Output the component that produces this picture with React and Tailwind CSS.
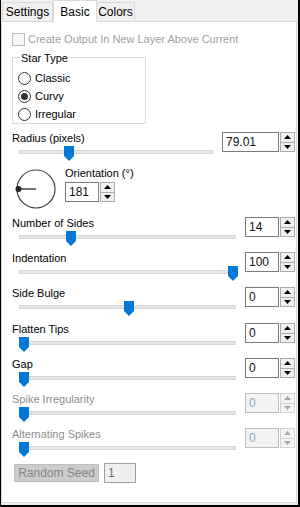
import React from "react";

const font = "font-['Liberation_Sans',Arial,sans-serif]";

function Thumb({ left }) {
  return (
    <svg
      width="10"
      height="15"
      viewBox="0 0 10 15"
      className="absolute top-[1px]"
      style={{ left }}
    >
      <path d="M0 0 H10 V10 L5 15 L0 10 Z" fill="#0078d7" />
    </svg>
  );
}

function Track({ wide, pos }) {
  return (
    <div className={`relative h-[16px] ml-[7px] ${wide ? "w-[217px]" : "w-[194px]"}`}>
      <div className="absolute left-0 right-0 top-[5px] h-[4px] bg-[#e7e7e7] border border-[#d6d6d6]" />
      <Thumb left={pos} />
    </div>
  );
}

function Arrow({ up, disabled }) {
  return (
    <svg width="7" height="4" viewBox="0 0 7 4">
      <path
        d={up ? "M3.5 0 L7 4 L0 4 Z" : "M0 0 L7 0 L3.5 4 Z"}
        fill={disabled ? "#a8a8a8" : "#000"}
      />
    </svg>
  );
}

function Spin({ value, inputW, disabled }) {
  return (
    <div className="flex h-[20px]">
      <div
        className={`${inputW} h-full flex items-center pl-[3px] text-[12px] border ${
          disabled
            ? "bg-[#f3f3f3] border-[#bcbcbc] text-[#8fa6c4]"
            : "bg-white border-[#7a7a7a] text-[#111]"
        }`}
      >
        {value}
      </div>
      <div
        className={`w-[15px] h-full flex flex-col border ml-[1px] ${
          disabled ? "border-[#d4d4d4]" : "border-[#adadad]"
        }`}
      >
        <div
          className={`flex-1 flex items-center justify-center border-b ${
            disabled ? "bg-[#f4f4f4] border-[#d4d4d4]" : "bg-[#f0f0f0] border-[#adadad]"
          }`}
        >
          <Arrow up disabled={disabled} />
        </div>
        <div
          className={`flex-1 flex items-center justify-center ${
            disabled ? "bg-[#f4f4f4]" : "bg-[#f0f0f0]"
          }`}
        >
          <Arrow disabled={disabled} />
        </div>
      </div>
    </div>
  );
}

function SliderRow({ label, value, pos, disabled, h = "h-[35px]" }) {
  return (
    <div className={`flex ${h}`}>
      <div className="w-[233px] flex flex-col">
        <div className={`h-[14px] leading-[14px] ${disabled ? "text-[#8d8d8d]" : "text-black"}`}>
          {label}
        </div>
        <Track wide pos={pos} />
      </div>
      <div className="mt-[1px]">
        <Spin value={value} inputW="w-[34px]" disabled={disabled} />
      </div>
    </div>
  );
}

function Radio({ label, checked }) {
  return (
    <div className="flex items-center h-[18px]">
      <div className="w-[13px] h-[13px] rounded-full border border-[#333] bg-white flex items-center justify-center">
        {checked && <div className="w-[7px] h-[7px] rounded-full bg-[#333]" />}
      </div>
      <span className="ml-[4px] text-black">{label}</span>
    </div>
  );
}

export default function App() {
  const sliders = [
    { label: "Number of Sides", value: "14", pos: 47 },
    { label: "Indentation", value: "100", pos: 209 },
    { label: "Side Bulge", value: "0", pos: 105, h: "h-[36px]" },
    { label: "Flatten Tips", value: "0", pos: 0 },
    { label: "Gap", value: "0", pos: 0 },
    { label: "Spike Irregularity", value: "0", pos: 0, disabled: true },
    { label: "Alternating Spikes", value: "0", pos: 0, disabled: true },
  ];

  return (
    <div
      className={`${font} text-[11px] w-[300px] h-[507px] flex flex-col bg-[#f0f0f0] border-l border-r-2 border-b-2 border-black pb-[2px] pr-[1px]`}
    >
      {/* tabs */}
      <div className="h-[21px] flex items-end relative z-10">
        <div className="h-[19px] w-[51px] ml-[1px] border border-b-0 border-[#d9d9d9] bg-[#f0f0f0] flex items-center justify-center text-[12px] text-black">
          Settings
        </div>
        <div className="h-[22px] w-[44px] -mb-px border border-b-0 border-[#d9d9d9] bg-white flex items-start pt-[2px] justify-center text-[12px] text-black">
          Basic
        </div>
        <div className="h-[19px] w-[38px] border border-b-0 border-l-0 border-[#d9d9d9] bg-[#f0f0f0] flex items-center justify-center text-[12px] text-black">
          Colors
        </div>
      </div>

      {/* panel */}
      <div className="flex-1 bg-white border border-[#d9d9d9] pl-[10px] flex flex-col">
        <div className="mt-[11px] flex items-center h-[13px]">
          <div className="w-[13px] h-[13px] border border-[#bcbcbc] bg-[#f7f7f7]" />
          <span className="ml-[3px] text-[#a0a0a0]">Create Output In New Layer Above Current</span>
        </div>

        <div className="relative mt-[11px] w-[134px] h-[67px] border border-[#dcdcdc] pl-[5px] pt-[11px]">
          <span className="absolute -top-[8px] left-[7px] bg-white px-[1px] text-black">Star Type</span>
          <Radio label="Classic" />
          <Radio label="Curvy" checked />
          <Radio label="Irregular" />
        </div>

        {/* radius */}
        <div className="flex mt-[7px] h-[35px]">
          <div className="w-[210px] flex flex-col">
            <div className="h-[14px] leading-[14px] text-black">Radius (pixels)</div>
            <Track pos={45} />
          </div>
          <div className="mt-[1px]">
            <Spin value="79.01" inputW="w-[57px]" />
          </div>
        </div>

        {/* dial + orientation */}
        <div className="flex h-[43px]">
          <div className="w-[53px]">
            <svg width="42" height="42" viewBox="0 0 42 42" className="mt-[2px] ml-[3px]">
              <circle cx="21" cy="21" r="19" fill="none" stroke="#404040" strokeWidth="1.2" />
              <line x1="3" y1="21" x2="21" y2="21" stroke="#333" strokeWidth="1.4" />
              <circle cx="3.5" cy="21" r="3" fill="#222" />
            </svg>
          </div>
          <div className="flex flex-col">
            <div className="h-[14px] leading-[14px] text-black">Orientation (°)</div>
            <div className="mt-[2px]">
              <Spin value="181" inputW="w-[34px]" />
            </div>
          </div>
        </div>

        <div className="mt-[7px] flex flex-col">
          {sliders.map((s) => (
            <SliderRow key={s.label} {...s} />
          ))}
        </div>

        <div className="flex items-center mt-[1px] ml-[2px]">
          <div className="w-[85px] h-[18px] bg-[#cccccc] border border-[#bfbfbf] flex items-center justify-center text-[12px] text-[#838383]">
            Random Seed
          </div>
          <div className="ml-[5px] w-[32px] h-[20px] bg-[#efefef] border border-[#a0a0a0] flex items-center pl-[3px] text-[12px] text-[#6d6d6d]">
            1
          </div>
        </div>
      </div>
    </div>
  );
}
